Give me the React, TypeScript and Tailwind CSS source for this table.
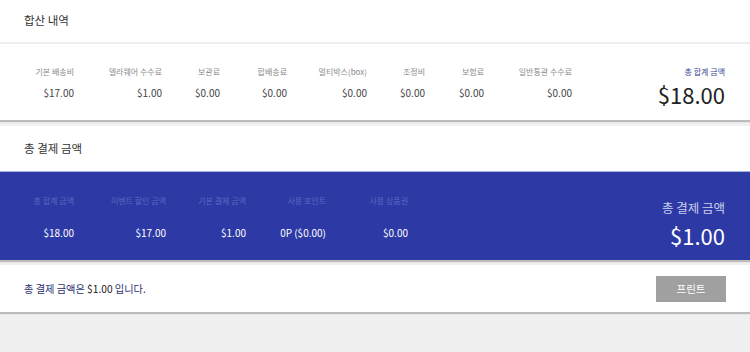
import React from 'react'

const fee = [
  { label: '기본 배송비', value: '$17.00', w: 'w-[74px]' },
  { label: '델라웨어 수수료', value: '$1.00', w: 'w-[88px]' },
  { label: '보관료', value: '$0.00', w: 'w-[58px]' },
  { label: '합배송료', value: '$0.00', w: 'w-[67px]' },
  { label: '멀티박스(box)', value: '$0.00', w: 'w-[80px]' },
  { label: '조정비', value: '$0.00', w: 'w-[58px]' },
  { label: '보험료', value: '$0.00', w: 'w-[59px]' },
  { label: '일반통관 수수료', value: '$0.00', w: 'w-[88px]' },
]

const pay = [
  { label: '총 합계 금액', value: '$18.00', w: 'w-[74px]' },
  { label: '이벤트 할인 금액', value: '$17.00', w: 'w-[92px]' },
  { label: '기본 결제 금액', value: '$1.00', w: 'w-[80px]' },
  { label: '사용 포인트', value: '0P ($0.00)', w: 'w-[80px]' },
  { label: '사용 상품권', value: '$0.00', w: 'w-[82px]' },
]

export default function App() {
  return (
    <div className="min-h-[352px] bg-[#f0f0f0] font-['Noto_Sans_CJK_KR','Noto_Sans',sans-serif] text-[#333]">
      {/* 합산 내역 */}
      <div className="bg-white shadow-[0_2px_1px_rgba(0,0,0,0.22)]">
        <div className="h-[44px] border-b-2 border-[#eeeeee] px-6 flex items-center text-[11.5px]">합산 내역</div>
        <div className="h-[76px] flex items-start pt-[22px] pr-[25px]">
          {fee.map(f => (
            <div key={f.label} className={`${f.w} shrink-0 text-right`}>
              <div className="text-[8px] leading-[12px] text-[#8a8a8a]">{f.label}</div>
              <div className="mt-[9px] text-[10px] leading-[12px] text-[#444]">{f.value}</div>
            </div>
          ))}
          <div className="ml-auto text-right">
            <div className="text-[8px] leading-[12px] text-[#3a4499]">총 합계 금액</div>
            <div className="mt-[3px] text-[22px] leading-[26px] text-[#222]">$18.00</div>
          </div>
        </div>
      </div>

      {/* 총 결제 금액 */}
      <div className="mt-[6px] bg-white shadow-[0_2px_1px_rgba(0,0,0,0.22)]">
        <div className="h-[45px] px-6 flex items-center text-[11.5px]">총 결제 금액</div>
        <div className="h-[89px] border-t border-[#a9afdd] bg-[#2d3aa5] flex items-start pt-[23px] pr-[25px]">
          {pay.map(p => (
            <div key={p.label} className={`${p.w} shrink-0 text-right`}>
              <div className="text-[8px] leading-[12px] text-[#5a68c0]">{p.label}</div>
              <div className="mt-[20px] text-[10px] leading-[12px] text-white">{p.value}</div>
            </div>
          ))}
          <div className="ml-auto text-right">
            <div className="mt-[5px] text-[12.5px] leading-[16px] text-[#c9cef0]">총 결제 금액</div>
            <div className="mt-[6px] text-[22px] leading-[26px] text-white">$1.00</div>
          </div>
        </div>
      </div>

      {/* 안내 */}
      <div className="mt-[5px] h-[47px] bg-white shadow-[0_2px_1px_rgba(0,0,0,0.22)] flex items-center justify-between pl-6 pr-[24px]">
        <div className="text-[10.2px] text-[#2c3272]">
          총 결제 금액은 <span className="text-[#222]">$1.00</span> 입니다.
        </div>
        <button className="w-[70px] h-[26px] bg-[#a0a0a0] text-white text-[10.5px]">프린트</button>
      </div>
    </div>
  )
}
